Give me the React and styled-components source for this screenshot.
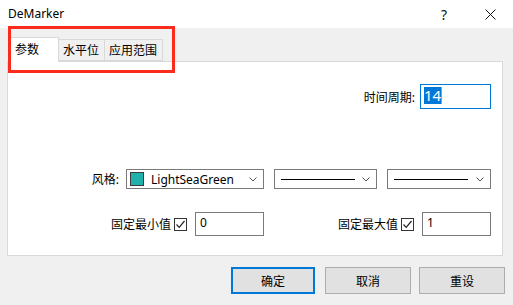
import React from 'react';
import styled, { createGlobalStyle } from 'styled-components';

// DeMarker 指标属性对话框

const GlobalStyle = createGlobalStyle`
  html, body {
    margin: 0;
    padding: 0;
    background: #f0f0f0;
  }
  * {
    box-sizing: border-box;
  }
`;

const UI_FONT = `"Noto Sans", "Noto Sans CJK SC", sans-serif`;

const Window = styled.div`
  position: relative;
  width: 513px;
  height: 305px;
  display: flex;
  flex-direction: column;
  background: #f0f0f0;
  font-family: ${UI_FONT};
  font-size: 12px;
  color: #000;
  overflow: hidden;
`;

/* 标题栏 */
const TitleBar = styled.div`
  height: 28px;
  flex: none;
  background: #fff;
  display: flex;
  align-items: center;
  padding-left: 8px;
  .title {
    flex: 1;
    font-size: 12px;
    padding-bottom: 1px;
  }
`;

const TitleButton = styled.div`
  width: ${(p) => p.$w}px;
  height: 28px;
  display: flex;
  align-items: center;
  justify-content: center;
  color: #111;
  font-size: 14px;
`;

const Body = styled.div`
  flex: 1;
  padding: 9px 10px 0 7px;
  display: flex;
  flex-direction: column;
`;

const TabStrip = styled.div`
  height: 24px;
  display: flex;
  align-items: flex-end;
  padding-left: 1px;
`;

const Tab = styled.div`
  position: relative;
  width: ${(p) => p.$w}px;
  height: ${(p) => (p.$active ? 25 : 22)}px;
  margin-bottom: ${(p) => (p.$active ? -1 : 0)}px;
  z-index: ${(p) => (p.$active ? 2 : 1)};
  background: ${(p) => (p.$active ? '#fff' : '#f0f0f0')};
  border: 1px solid #d9d9d9;
  border-bottom: ${(p) => (p.$active ? 'none' : '1px solid #d9d9d9')};
  margin-left: ${(p) => (p.$first ? 0 : -1)}px;
  display: flex;
  align-items: center;
  padding-left: ${(p) => (p.$active ? 6 : 4)}px;
  padding-bottom: ${(p) => (p.$active ? 2 : 0)}px;
  white-space: nowrap;
`;

/* 红色标注框 */
const Highlight = styled.div`
  position: absolute;
  left: 8px;
  top: 26px;
  width: 167px;
  height: 47px;
  border: 3px solid #fb2c1c;
  z-index: 5;
  pointer-events: none;
`;

const Panel = styled.div`
  height: 195px;
  background: #fff;
  border: 1px solid #d9d9d9;
  padding: 22px 11px 0 0;
  display: flex;
  flex-direction: column;
`;

const Row = styled.div`
  display: flex;
  justify-content: flex-end;
  align-items: center;
  gap: ${(p) => p.$gap || 0}px;
  margin-top: ${(p) => p.$top || 0}px;
`;

const Group = styled.div`
  display: flex;
  align-items: center;
`;

const Label = styled.span`
  margin-right: ${(p) => p.$mr}px;
  white-space: nowrap;
`;

const TextBox = styled.div`
  width: ${(p) => p.$w}px;
  height: ${(p) => p.$h}px;
  border: 1px solid ${(p) => (p.$focus ? '#0078d7' : '#7a7a7a')};
  background: #fff;
  padding: ${(p) => (p.$focus ? '2px 0 0 3px' : '2px 0 0 4px')};
  font-size: ${(p) => (p.$focus ? 15 : 12)}px;
  line-height: ${(p) => (p.$focus ? 17 : 16)}px;
  display: flex;
  align-items: flex-start;
`;

const Selected = styled.span`
  background: #0078d7;
  color: #fff;
  border-right: 1px solid #ff8a00;
`;

const Combo = styled.div`
  width: ${(p) => p.$w}px;
  height: 20px;
  border: 1px solid #7a7a7a;
  background: #fff;
  margin-left: ${(p) => p.$ml || 0}px;
  display: flex;
  align-items: center;
  padding: 0 6px 0 2px;
  .value {
    flex: 1;
    display: flex;
    align-items: center;
    gap: 7px;
  }
`;

const Swatch = styled.span`
  width: 14px;
  height: 14px;
  background: ${(p) => p.$color};
  border: 1px solid #3b3b3b;
  margin-left: 1px;
`;

const LineSample = styled.span`
  width: 74px;
  height: 1px;
  background: #000;
  margin-left: 4px;
`;

const CheckBox = styled.span`
  width: 13px;
  height: 13px;
  border: 1px solid #333;
  margin: 0 8px 0 3px;
  display: flex;
  align-items: center;
  justify-content: center;
`;

const Footer = styled.div`
  margin-top: 11px;
  display: flex;
  justify-content: flex-end;
  gap: 8px;
  padding-right: 8px;
  margin-right: -10px;
`;

const Button = styled.div`
  width: ${(p) => (p.$default ? 84 : 86)}px;
  height: 27px;
  margin-right: ${(p) => (p.$default ? 2 : 0)}px;
  background: #e1e1e1;
  border: ${(p) => (p.$default ? '2px solid #0078d7' : '1px solid #adadad')};
  display: flex;
  align-items: center;
  justify-content: center;
  font-size: 12px;
`;

const Chevron = () => (
  <svg width="8" height="5" viewBox="0 0 8 5">
    <path d="M0.5 0.5 L4 4 L7.5 0.5" fill="none" stroke="#555" strokeWidth="1" />
  </svg>
);

const Check = () => (
  <svg width="11" height="11" viewBox="0 0 11 11">
    <path d="M1.5 5.5 L4.2 8.3 L9.5 2" fill="none" stroke="#222" strokeWidth="1.2" />
  </svg>
);

const CloseIcon = () => (
  <svg width="11" height="11" viewBox="0 0 11 11">
    <path d="M0.5 0.5 L10.5 10.5 M10.5 0.5 L0.5 10.5" stroke="#111" strokeWidth="1" />
  </svg>
);

const App = () => {
  return (
    <>
      <GlobalStyle />
      <Window>
        <TitleBar>
          <span className="title">DeMarker</span>
          <TitleButton $w={46}>?</TitleButton>
          <TitleButton $w={46}>
            <CloseIcon />
          </TitleButton>
        </TitleBar>
        <Highlight />
        <Body>
          <TabStrip>
            <Tab $active $first $w={51}>参数</Tab>
            <Tab $w={47}>水平位</Tab>
            <Tab $w={59}>应用范围</Tab>
          </TabStrip>
          <Panel>
            <Row>
              <Label $mr={5}>时间周期:</Label>
              <TextBox $w={71} $h={25} $focus>
                <Selected>14</Selected>
              </TextBox>
            </Row>
            <Row $top={60}>
              <Label $mr={7}>风格:</Label>
              <Combo $w={138}>
                <span className="value">
                  <Swatch $color="#20b2aa" />
                  LightSeaGreen
                </span>
                <Chevron />
              </Combo>
              <Combo $w={103} $ml={10}>
                <span className="value">
                  <LineSample />
                </span>
                <Chevron />
              </Combo>
              <Combo $w={104} $ml={10}>
                <span className="value">
                  <LineSample />
                </span>
                <Chevron />
              </Combo>
            </Row>
            <Row $top={23} $gap={74}>
              <Group>
                <Label $mr={0}>固定最小值</Label>
                <CheckBox>
                  <Check />
                </CheckBox>
                <TextBox $w={69} $h={24}>0</TextBox>
              </Group>
              <Group>
                <Label $mr={0}>固定最大值</Label>
                <CheckBox>
                  <Check />
                </CheckBox>
                <TextBox $w={69} $h={24}>1</TextBox>
              </Group>
            </Row>
          </Panel>
          <Footer>
            <Button $default>确定</Button>
            <Button>取消</Button>
            <Button>重设</Button>
          </Footer>
        </Body>
      </Window>
    </>
  );
};

export default App;
